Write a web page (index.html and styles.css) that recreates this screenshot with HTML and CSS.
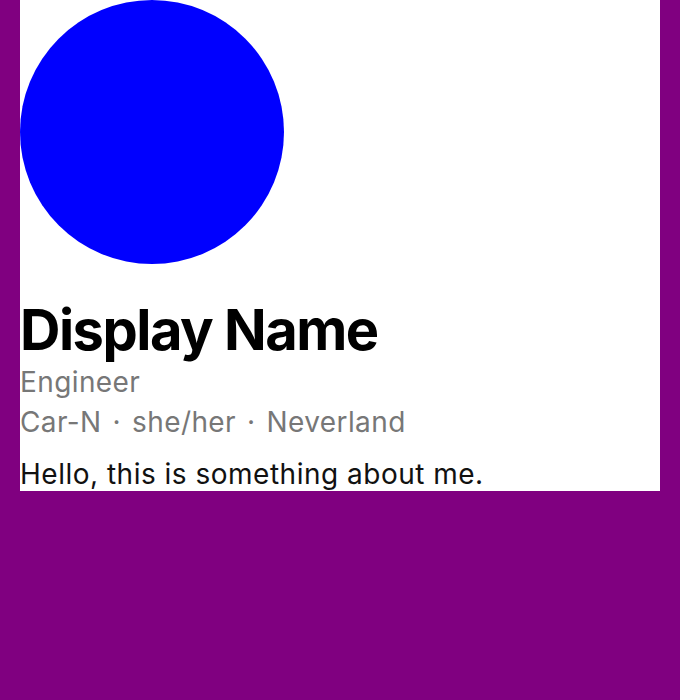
FILE: index.html
```html
<!DOCTYPE html>
<html>
<head>
<meta charset="utf-8">
<link rel="stylesheet" href="styles.css">
</head>
<body>
<div class="card">
  <div class="avatar"></div>
  <h1 class="name">Display Name</h1>
  <div class="title">Engineer</div>
  <div class="meta">
    <span>Car-N</span><span class="sep">·</span><span>she/her</span><span class="sep">·</span><span>Neverland</span>
  </div>
  <p class="bio">Hello, this is something about me.</p>
</div>
</body>
</html>
```
FILE: styles.css
```css
html, body {
  margin: 0;
  padding: 0;
  background: #800080;
}
body {
  font-family: Inter, "Noto Sans", sans-serif;
}
.card {
  margin: 0 20px;
  background: #fff;
  display: flex;
  flex-direction: column;
}
.avatar {
  width: 264px;
  height: 264px;
  border-radius: 50%;
  background: #0000ff;
}
.name {
  margin: 34px 0 0;
  font-size: 56px;
  font-weight: 700;
  line-height: 64px;
  color: #000;
  letter-spacing: -1.5px;
}
.title, .meta {
  font-size: 28px;
  color: #777;
  line-height: 40px;
  letter-spacing: 0.4px;
}
.meta {
  display: flex;
  gap: 11px;
}
.bio {
  margin: 15px 0 0;
  font-size: 28px;
  line-height: 34px;
  letter-spacing: 0.5px;
  color: #111;
}
```
